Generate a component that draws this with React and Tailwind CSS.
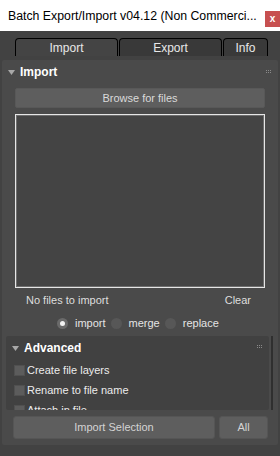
const Grip = () => (
  <div className="grid grid-cols-3 gap-[1px]">
    {[0, 1, 2, 3, 4, 5].map((i) => (
      <span key={i} className="block w-[1px] h-[1px] bg-[#8a8a8a]" />
    ))}
  </div>
)

const Triangle = () => (
  <svg width="7" height="5" viewBox="0 0 7 5" className="shrink-0">
    <path d="M0 0H7L3.5 5Z" fill="#a8a8a8" />
  </svg>
)

const Radio = ({ checked, label }) => (
  <div className="flex items-center">
    <span className={`w-[11px] h-[11px] rounded-full flex items-center justify-center ${checked ? 'bg-[#6a6a6a]' : 'bg-[#575757]'}`}>
      {checked && <span className="w-[5px] h-[5px] rounded-full bg-[#f2f2f2]" />}
    </span>
    <span className="ml-[7px] text-[#e4e4e4]">{label}</span>
  </div>
)

const Check = ({ label }) => (
  <div className="h-[20px] flex items-center pl-[8px]">
    <span className="w-[11px] h-[11px] bg-[#5c5c5c] border border-[#505050]" />
    <span className="ml-[2px] text-[#ececec]">{label}</span>
  </div>
)

export default function App() {
  const tabs = [
    { label: 'Import', w: 'w-[103px]', active: true },
    { label: 'Export', w: 'w-[103px]' },
    { label: 'Info', w: 'w-[45px]' },
  ]

  return (
    <div className="w-[280px] h-[456px] bg-[#424242] overflow-hidden flex flex-col [font-family:'Liberation_Sans',Arial,sans-serif] text-[11px] leading-none">
      {/* Title bar */}
      <div className="h-[31px] bg-white flex items-start shrink-0">
        <span className="pl-[8px] pt-[10px] text-[12.3px] text-black whitespace-nowrap">
          Batch Export/Import v04.12 (Non Commerci...
        </span>
        <span className="ml-auto mt-[11px] w-[15px] h-[16px] bg-[#c75050] text-white text-[10px] font-bold flex items-center justify-center">
          x
        </span>
      </div>

      {/* Tabs */}
      <div className="h-[29px] shrink-0 pt-[7px] pl-[15px] flex gap-[1px]">
        {tabs.map((t) => (
          <div
            key={t.label}
            className={`${t.w} h-[18px] border-t border-x border-black rounded-t-[4px] flex items-center justify-center text-[12px] text-[#e8e8e8] ${t.active ? 'bg-[#444444]' : 'bg-[#393939]'}`}
          >
            {t.label}
          </div>
        ))}
      </div>

      {/* Import rollout */}
      <div className="mx-[2px] mb-[11px] flex-1 bg-[#4a4a4a] rounded-[2px] flex flex-col">
        <div className="h-[24px] flex items-center pl-[6px] pr-[7px]">
          <Triangle />
          <span className="ml-[5px] text-[12px] font-bold text-white">Import</span>
          <span className="ml-auto mt-[-1px]"><Grip /></span>
        </div>

        <div className="px-[13px]">
          <div className="mt-[4px] h-[20px] bg-[#5e5e5e] rounded-[2px] border border-[#585858] flex items-center justify-center text-[#dadada]">
            Browse for files
          </div>
          <div className="mt-[6px] h-[174px] bg-[#444444] border border-[#e6e6e6] shadow-[inset_0_0_0_1px_#6e6e6e]" />
        </div>

        <div className="h-[24px] flex items-center pl-[24px] pr-[27px] text-[#dedede]">
          <span>No files to import</span>
          <span className="ml-auto">Clear</span>
        </div>

        <div className="h-[22px] flex items-center pl-[55px] gap-[5px]">
          <Radio checked label="import" />
          <Radio label="merge" />
          <Radio label="replace" />
        </div>

        {/* Advanced scroll area */}
        <div className="mt-[2px] h-[74px] flex pl-[4px] pr-[2px]">
          <div className="w-[263px] h-full overflow-hidden bg-[#414141] rounded-[2px]">
            <div className="h-[24px] flex items-center pl-[6px] pr-[7px]">
              <Triangle />
              <span className="ml-[5px] text-[12px] font-bold text-white">Advanced</span>
              <span className="ml-auto mt-[-3px]"><Grip /></span>
            </div>
            <Check label="Create file layers" />
            <Check label="Rename to file name" />
            <Check label="Attach in file" />
          </div>
          <div className="ml-[2px] w-[2px] h-full bg-[#2f2f2f]" />
        </div>

        <div className="mt-[6px] h-[23px] flex gap-[4px] pl-[11px] pr-[10px]">
          <div className="w-[202px] h-full bg-[#5e5e5e] rounded-[3px] border border-[#555555] flex items-center justify-center text-[#d4d4d4]">
            Import Selection
          </div>
          <div className="flex-1 h-full bg-[#5e5e5e] rounded-[3px] border border-[#555555] flex items-center justify-center text-[#d4d4d4]">
            All
          </div>
        </div>
      </div>
    </div>
  )
}
